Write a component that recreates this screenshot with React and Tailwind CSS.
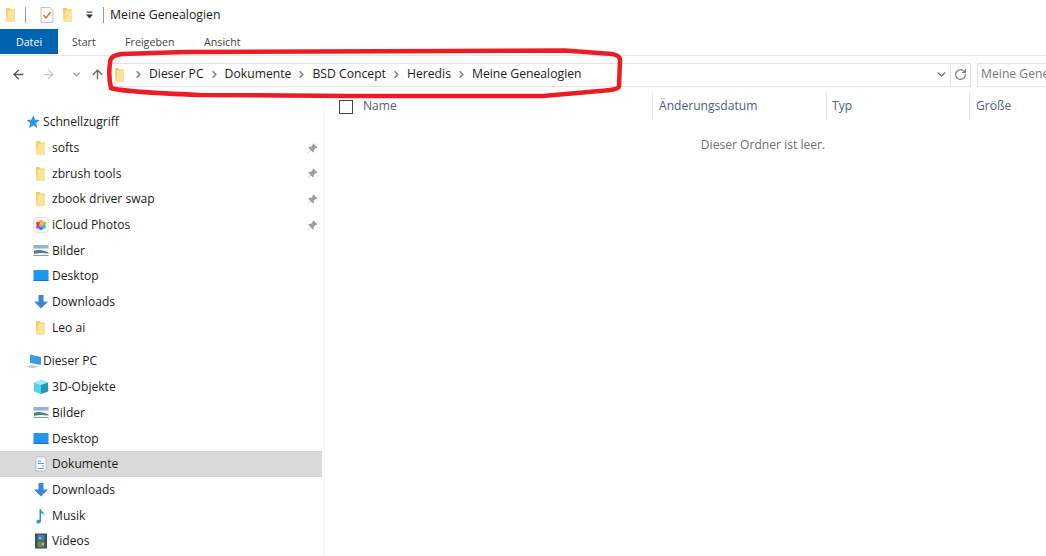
import React from 'react';
import { ArrowLeft, ArrowRight, ArrowUp, ChevronDown, ChevronRight, RotateCw } from 'lucide-react';

const FolderIcon = () => (
  <svg width="16" height="16" viewBox="0 0 16 16" className="shrink-0">
    <path d="M3 1h3.500l1 1.500H12V15H3.500z" fill="#f0cd63" />
    <path d="M5 3.500h7V15H4z" fill="#fbe49a" />
  </svg>
);

const PictureIcon = () => (
  <svg width="16" height="16" viewBox="0 0 16 16" className="shrink-0">
    <rect x="0.500" y="2" width="15" height="11" fill="#eef3f7" />
    <rect x="0.500" y="2" width="15" height="3.500" fill="#8eb4d6" />
    <path d="M1 8c4-2 9-1 14.500 1.500v1C10 9.500 5 10 1 11z" fill="#4e8174" />
    <rect x="0.500" y="12" width="15" height="1" fill="#8a9aa8" />
  </svg>
);

const DesktopIcon = () => (
  <svg width="16" height="16" viewBox="0 0 16 16" className="shrink-0">
    <rect x="0.500" y="2" width="15" height="11" rx="0.500" fill="#1e96ee" />
    <rect x="0.500" y="12" width="15" height="1" fill="#1278c4" />
  </svg>
);

const DownloadIcon = () => (
  <svg width="16" height="16" viewBox="0 0 16 16" className="shrink-0">
    <path d="M5.500 1h5v6.500H15L8 14.500 1 7.500h4.500z" fill="#3a87d9" />
  </svg>
);

const PhotosIcon = () => (
  <svg width="16" height="16" viewBox="0 0 16 16" className="shrink-0">
    <rect x="0.500" y="0.500" width="15" height="15" rx="3.500" fill="#f4f4f4" stroke="#d0d0d0" strokeWidth="0.500" />
    <circle cx="8" cy="4.800" r="2" fill="#f5b52e" />
    <circle cx="11" cy="6.500" r="2" fill="#9ccc3c" />
    <circle cx="11" cy="9.800" r="2" fill="#3cb6c9" />
    <circle cx="8" cy="11.300" r="2" fill="#5a72d8" />
    <circle cx="5" cy="9.800" r="2" fill="#b04cc4" />
    <circle cx="5" cy="6.500" r="2" fill="#e8483e" />
    <circle cx="8" cy="8" r="1.500" fill="#f4a03a" />
  </svg>
);

const CubeIcon = () => (
  <svg width="16" height="16" viewBox="0 0 16 16" className="shrink-0">
    <path d="M8 1l7 2.500v9L8 15z" fill="#1a9bc4" />
    <path d="M8 1L1 3.500v9L8 15z" fill="#52d2e8" />
    <path d="M8 1l7 2.500L8 6 1 3.500z" fill="#a8ecf5" />
  </svg>
);

const DocsIcon = () => (
  <svg width="16" height="16" viewBox="0 0 16 16" className="shrink-0">
    <path d="M3 1h8l2 2v12H3z" fill="#f6f8fa" stroke="#a9b4be" strokeWidth="0.700" />
    <path d="M5 5h3M5 7.500h6M9 10h2M5 12.500h6" stroke="#5f9ed1" strokeWidth="1" />
  </svg>
);

const MusicIcon = () => (
  <svg width="16" height="16" viewBox="0 0 16 16" className="shrink-0">
    <path d="M6.500 1h1.300c.4 2.500 3.700 3.500 3.700 6.500-1-1.500-2.300-2.200-3.500-2.400V13c0 1.500-1.300 2.500-2.700 2.500S3.500 14.600 3.500 13.400s1.300-2 3-1.700z" fill="#2a93e0" />
  </svg>
);

const VideoIcon = () => (
  <svg width="16" height="16" viewBox="0 0 16 16" className="shrink-0">
    <rect x="2" y="0.500" width="12" height="15" fill="#3d5068" />
    <rect x="4.500" y="2" width="7" height="5.500" fill="#3f7fc4" />
    <rect x="4.500" y="8.500" width="7" height="5.500" fill="#6d8a3e" />
    <path d="M6 4h2v2H6zM9 10h2v2H9z" fill="#e2b83a" />
  </svg>
);

const PinIcon = () => (
  <svg width="11" height="11" viewBox="0 0 11 11" className="shrink-0">
    <path d="M6.500 0.500l4 4-1 .6-.8-.2-2 2 .2 1.700-.9.900-2.300-2.300L1 10 .6 9.700l2.900-2.800L1.200 4.600l.9-.9 1.700.2 2-2-.2-.8z" fill="#9b9ea3" />
  </svg>
);

const StarIcon = () => (
  <svg width="14" height="14" viewBox="0 0 14 14" className="shrink-0">
    <path d="M7.500 0.500l1.700 4.300 4.500.3-3.500 2.900 1.100 5.200-3.800-2.700L3 13l1.200-4.900L.5 5.100l4.700-.3z" fill="#2e97e6" />
  </svg>
);

const PcIcon = () => (
  <svg width="17" height="15" viewBox="0 0 17 15" className="shrink-0">
    <path d="M5 0.500l11 2.500v8l-11-2z" fill="#3a9ce4" />
    <path d="M1 12.500l7-1.500 6 1.500-7 2z" fill="#c4cbd1" />
  </svg>
);

const CheckNoteIcon = () => (
  <svg width="14" height="16" viewBox="0 0 14 16" className="shrink-0">
    <path d="M1 .5h9l3 3v12H1z" fill="#fbfbfb" stroke="#a8a8a8" strokeWidth="0.700" />
    <path d="M3.500 8l2.500 3 4.500-6" fill="none" stroke="#d8603a" strokeWidth="1.300" />
  </svg>
);

const DropIcon = () => (
  <svg width="7" height="8" viewBox="0 0 7 8" className="shrink-0 ml-[10px]">
    <rect x="0.500" y="0.500" width="6" height="1.200" fill="#444" />
    <path d="M0 3.500h7L3.500 7.500z" fill="#333" />
  </svg>
);

const NavRow = ({ icon, label, pinned, selected }) => (
  <div className={`h-[25.7px] flex items-center pl-[33px] ${selected ? 'bg-[#d9d9d9]' : ''}`}>
    <span className="w-[19px] flex">{icon}</span>
    <span className="flex-1">{label}</span>
    {pinned && <span className="w-[15px] flex"><PinIcon /></span>}
  </div>
);

const Crumb = ({ label }) => (
  <span className="flex items-center ml-[5px]">
    <ChevronRight size={11} strokeWidth={3.600} className="text-[#808080]" />
    <span className="ml-[5px]">{label}</span>
  </span>
);

export default function App() {
  return (
    <div className="relative w-[1046px] h-[556px] overflow-hidden bg-white text-[#1a1a1a] text-[12.100px] font-['Open_Sans',sans-serif]">
      {/* Titelzeile */}
      <div className="h-[29px] flex items-center pl-[3px] pt-[1px]">
        <FolderIcon />
        <div className="w-px h-[16px] bg-[#9a9a9a] ml-[6px] mr-[14px]" />
        <CheckNoteIcon />
        <span className="ml-[6px] flex"><FolderIcon /></span>
        <DropIcon />
        <div className="w-px h-[16px] bg-[#9a9a9a] ml-[10px] mr-[6px]" />
        <span className="text-[12.300px]">Meine Genealogien</span>
      </div>

      {/* Ribbon */}
      <div className="h-[27px] flex items-start border-b border-[#e6e6e6] text-[10.700px] text-[#444]">
        <div className="w-[58px] h-[25px] pt-[1px] bg-[#0063b1] text-white flex items-center justify-center">Datei</div>
        <div className="h-[25px] pt-[1px] flex items-center ml-[14px] w-[53px]">Start</div>
        <div className="h-[25px] pt-[1px] flex items-center w-[79px]">Freigeben</div>
        <div className="h-[25px] pt-[1px] flex items-center">Ansicht</div>
      </div>

      {/* Adressleiste */}
      <div className="h-[36px] flex items-center pl-[11px] pt-[1px] text-[12.200px]">
        <ArrowLeft size={15} strokeWidth={2.200} className="text-[#555]" />
        <ArrowRight size={15} strokeWidth={2} className="text-[#c8c8c8] ml-[15px]" />
        <ChevronDown size={11} strokeWidth={3} className="text-[#9a9a9a] ml-[15px]" />
        <ArrowUp size={15} strokeWidth={2.200} className="text-[#666] ml-[8px]" />
        <div className="ml-[6px] w-[860px] h-[24px] border border-[#e3e3e3] flex items-center">
          <FolderIcon />
          <Crumb label="Dieser PC" />
          <Crumb label="Dokumente" />
          <Crumb label="BSD Concept" />
          <Crumb label="Heredis" />
          <Crumb label="Meine Genealogien" />
          <div className="flex-1" />
          <ChevronDown size={13} strokeWidth={2.600} className="text-[#666] mr-[2px]" />
          <div className="w-px h-full bg-[#e3e3e3]" />
          <RotateCw size={13} strokeWidth={2.200} className="text-[#777] mx-[3px]" />
        </div>
        <div className="ml-[6px] flex-1 h-[24px] border border-r-0 border-[#e3e3e3] flex items-center pl-[3px] text-[#777] overflow-hidden whitespace-nowrap">
          Meine Gene
        </div>
      </div>

      <div className="flex">
        {/* Navigationsbereich */}
        <div className="w-[322px] pt-[17.500px]">
          <div className="h-[25.700px] flex items-center pl-[26px]">
            <span className="w-[17px] flex"><StarIcon /></span>
            <span>Schnellzugriff</span>
          </div>
          <NavRow icon={<FolderIcon />} label="softs" pinned />
          <NavRow icon={<FolderIcon />} label="zbrush tools" pinned />
          <NavRow icon={<FolderIcon />} label="zbook driver swap" pinned />
          <NavRow icon={<PhotosIcon />} label="iCloud Photos" pinned />
          <NavRow icon={<PictureIcon />} label="Bilder" />
          <NavRow icon={<DesktopIcon />} label="Desktop" />
          <NavRow icon={<DownloadIcon />} label="Downloads" />
          <NavRow icon={<FolderIcon />} label="Leo ai" />
          <div className="h-[8px]" />
          <div className="h-[25.700px] flex items-center pl-[25px]">
            <span className="w-[18px] flex"><PcIcon /></span>
            <span>Dieser PC</span>
          </div>
          <NavRow icon={<CubeIcon />} label="3D-Objekte" />
          <NavRow icon={<PictureIcon />} label="Bilder" />
          <NavRow icon={<DesktopIcon />} label="Desktop" />
          <NavRow icon={<DocsIcon />} label="Dokumente" selected />
          <NavRow icon={<DownloadIcon />} label="Downloads" />
          <NavRow icon={<MusicIcon />} label="Musik" />
          <NavRow icon={<VideoIcon />} label="Videos" />
        </div>
        <div className="w-[2px] ml-[1px] h-[480px] bg-[#f8f8f8]" />

        {/* Dateiliste */}
        <div className="flex-1">
          <div className="h-[28px] pt-[1px] grid grid-cols-[327px_174px_143px_1fr] text-[#4c607a]">
            <div className="flex items-center pl-[14px]">
              <div className="w-[14px] h-[14px] border border-[#444]" />
              <span className="ml-[10px]">Name</span>
            </div>
            <div className="flex items-center pl-[6px] border-l border-[#e5e5e5]">Änderungsdatum</div>
            <div className="flex items-center pl-[5px] border-l border-[#e5e5e5]">Typ</div>
            <div className="flex items-center pl-[6px] border-l border-[#e5e5e5]">Größe</div>
          </div>
          <div className="mt-[16px] text-center text-[#6d6d6d] pl-[155px]">Dieser Ordner ist leer.</div>
        </div>
      </div>

      {/* rote Markierung */}
      <svg className="absolute left-0 top-0 pointer-events-none" width="1046" height="556" viewBox="0 0 1046 556">
        <path d="M110 63C110 57 114 55 122 54L185 52 565 50.500 612 54C618 55 620 57 620 60L619 86C619 89 612 90 600 91L543 96H350L200 95C150 93 120 91 111 88 109 80 109 70 110 63Z" fill="none" stroke="#ed1c24" strokeWidth="4.500" />
      </svg>
    </div>
  );
}
